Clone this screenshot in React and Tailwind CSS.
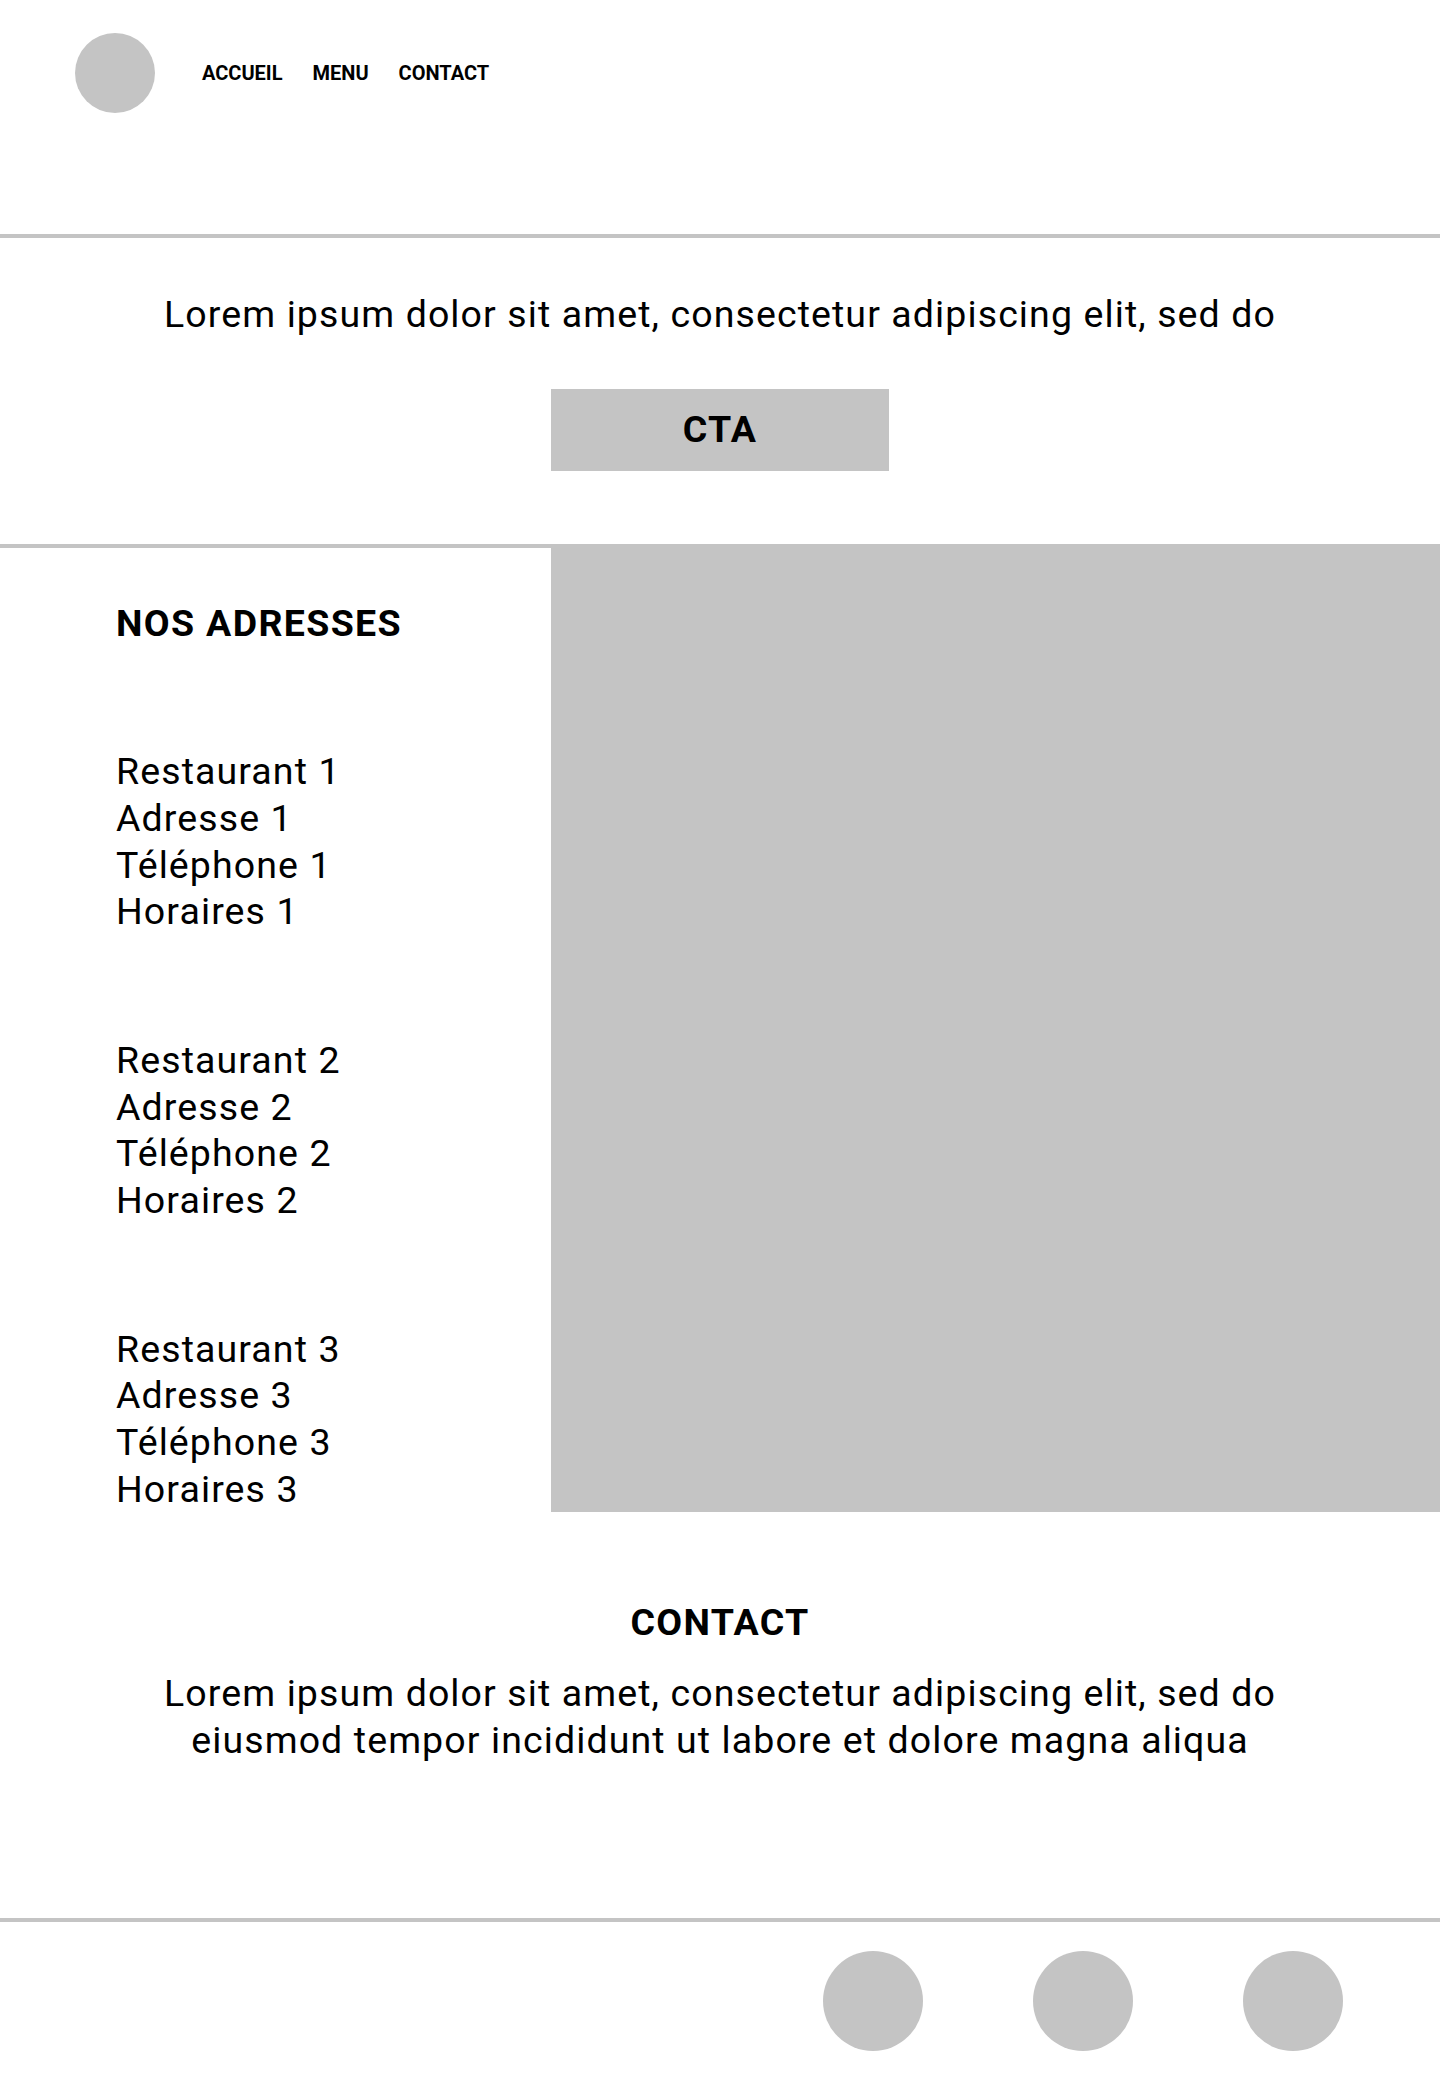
const adresses = [1, 2, 3];

export default function App() {
  return (
    <div className="w-[1440px] min-h-[2092px] bg-white text-black font-['Roboto',sans-serif]">
      {/* Header */}
      <header className="h-[234px] pl-[75px] pt-[33px]">
        <div className="flex items-center gap-[47px]">
          <div className="w-[80px] h-[80px] rounded-full bg-[#c4c4c4]" />
          <nav className="flex items-center gap-[30px] text-[20px] font-bold leading-[24px]">
            <a href="#">ACCUEIL</a>
            <a href="#">MENU</a>
            <a href="#">CONTACT</a>
          </nav>
        </div>
      </header>
      <div className="h-[4px] bg-[#c4c4c4]" />

      {/* Hero */}
      <section className="flex flex-col items-center pt-[53px] pb-[73px]">
        <p className="text-[37.5px] leading-[46.67px] tracking-[1.1px]">
          Lorem ipsum dolor sit amet, consectetur adipiscing elit, sed do
        </p>
        <button className="mt-[51px] w-[338px] h-[82px] bg-[#c4c4c4] text-[37.5px] font-bold leading-[46.67px] tracking-[1.35px]">
          CTA
        </button>
      </section>

      {/* Adresses + carte */}
      <section className="flex">
        <div className="w-[551px] border-t-4 border-[#c4c4c4] pl-[116px] pt-[52px] flex flex-col gap-[102px] text-[37.5px] leading-[46.67px] tracking-[1.1px]">
          <h2 className="font-bold tracking-[1.35px]">NOS ADRESSES</h2>
          {adresses.map((n) => (
            <div key={n}>
              <p>Restaurant {n}</p>
              <p>Adresse {n}</p>
              <p>Téléphone {n}</p>
              <p>Horaires {n}</p>
            </div>
          ))}
        </div>
        <div className="flex-1 bg-[#c4c4c4]" />
      </section>

      {/* Contact */}
      <section className="flex flex-col items-center pt-[87px] pb-[155px] text-center">
        <h2 className="text-[37.5px] font-bold leading-[46.67px] tracking-[1.35px]">CONTACT</h2>
        <p className="mt-[24px] max-w-[1180px] text-[37.5px] leading-[46.67px] tracking-[1.1px]">
          Lorem ipsum dolor sit amet, consectetur adipiscing elit, sed do eiusmod tempor incididunt ut labore et dolore magna aliqua
        </p>
      </section>

      {/* Footer */}
      <footer className="border-t-4 border-[#c4c4c4] pt-[29px] pb-[40px] pr-[97px] flex justify-end gap-[110px]">
        <div className="w-[100px] h-[100px] rounded-full bg-[#c4c4c4]" />
        <div className="w-[100px] h-[100px] rounded-full bg-[#c4c4c4]" />
        <div className="w-[100px] h-[100px] rounded-full bg-[#c4c4c4]" />
      </footer>
    </div>
  );
}
